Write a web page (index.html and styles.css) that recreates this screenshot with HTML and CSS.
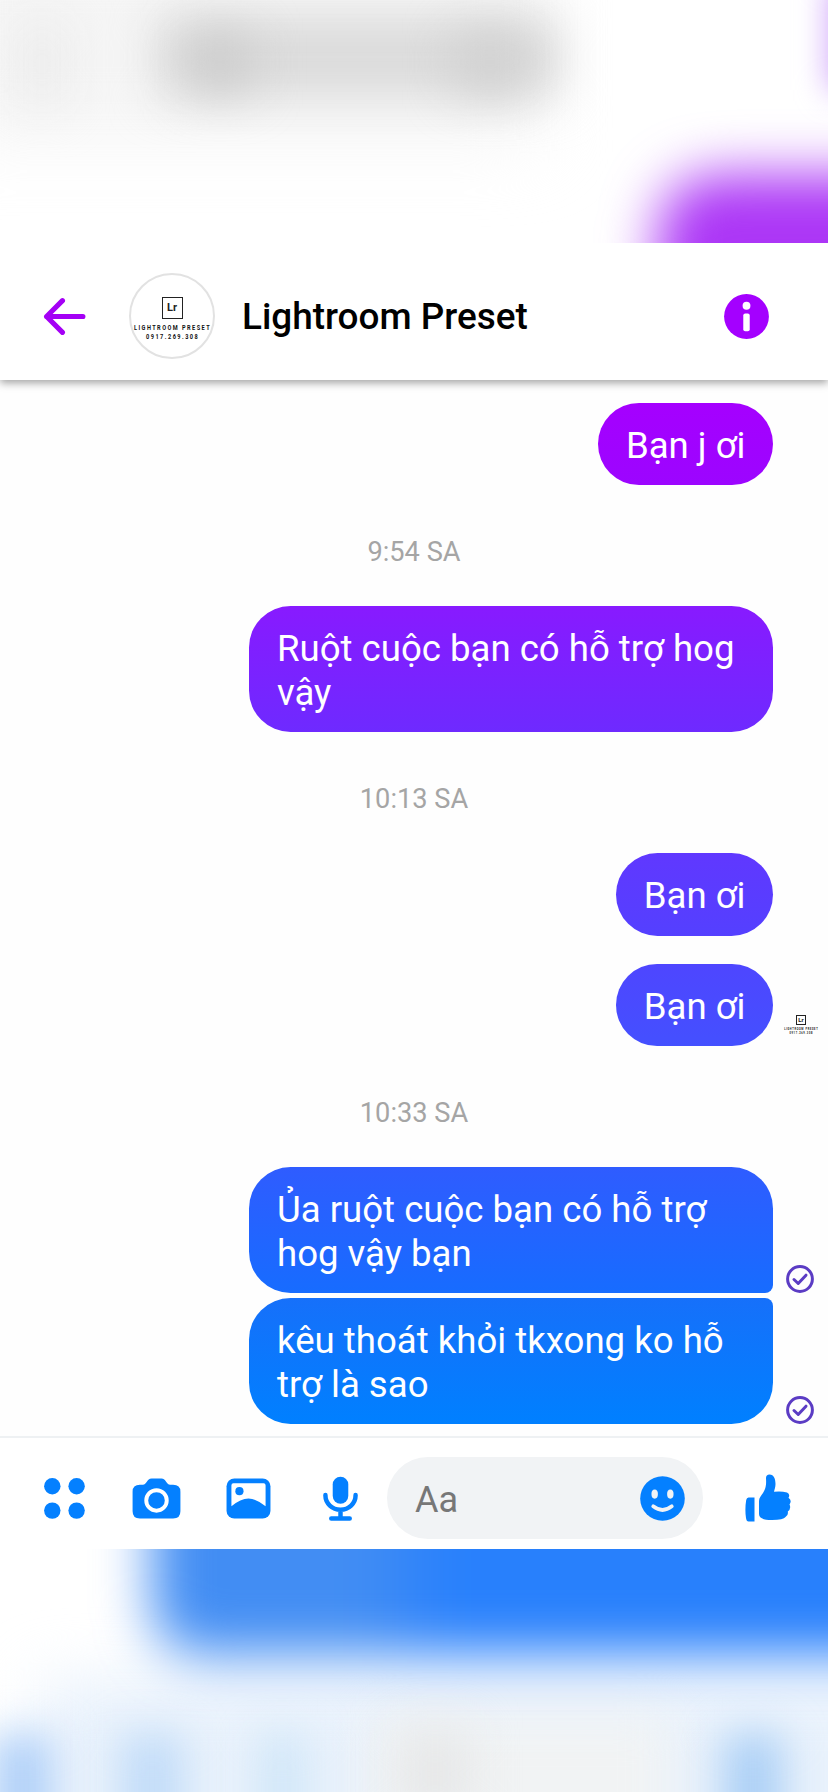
FILE: index.html
```html
<!DOCTYPE html>
<html lang="vi">
<head>
<meta charset="utf-8">
<title>Lightroom Preset</title>
<link rel="stylesheet" href="styles.css">
</head>
<body>
<div class="page">
  <div class="band band-top">
    <i class="haze haze-status"></i>
    <i class="haze haze-back"></i>
    <i class="haze haze-title"></i>
    <i class="haze haze-title-left"></i>
    <i class="haze haze-title-right"></i>
    <i class="haze haze-info"></i>
    <i class="haze haze-bubble"></i>
  </div>

  <header class="header">
    <svg class="back" viewBox="0 0 42 38" fill="none" stroke="#a400f5" stroke-width="5" stroke-linecap="round" stroke-linejoin="round"><path d="M39 19H3.500M19 3.500L3.500 19L19 34.500"/></svg>
    <div class="avatar">
      <span class="logo">Lr</span>
      <svg class="caption" viewBox="0 0 78 18"><g transform="scale(.72 1)"><text x="54" y="7" text-anchor="middle" textLength="105">LIGHTROOM PRESET</text><text x="54" y="16.500" text-anchor="middle" textLength="72">0917.269.308</text></g></svg>
    </div>
    <h1 class="title">Lightroom Preset</h1>
    <svg class="info" viewBox="0 0 46 46"><circle cx="23" cy="23" r="22.900" fill="#a400ff"/><circle cx="23" cy="12" r="4" fill="#fff"/><rect x="19.700" y="20" width="6.600" height="18" rx="2" fill="#fff"/></svg>
  </header>

  <main class="chat">
    <div class="row"><p class="bubble b1">Bạn j ơi</p></div>
    <time class="time">9:54 SA</time>
    <div class="row"><p class="bubble wide b2">Ruột cuộc bạn có hỗ trợ hog<br>vậy</p></div>
    <time class="time">10:13 SA</time>
    <div class="row"><p class="bubble b3">Bạn ơi</p></div>
    <div class="row spaced"><p class="bubble b4">Bạn ơi</p>
      <div class="seen">
        <span class="logo-small">Lr</span>
        <svg class="caption-small" viewBox="0 0 78 18"><g transform="scale(.72 1)"><text x="54" y="7" text-anchor="middle" textLength="105">LIGHTROOM PRESET</text><text x="54" y="16.500" text-anchor="middle" textLength="72">0917.269.308</text></g></svg>
      </div>
    </div>
    <time class="time">10:33 SA</time>
    <div class="row"><p class="bubble wide b5">Ủa ruột cuộc bạn có hỗ trợ<br>hog vậy bạn</p>
      <svg class="sent" viewBox="0 0 28 28" fill="none" stroke="#5b3cc4" stroke-width="3" stroke-linecap="round" stroke-linejoin="round"><circle cx="14" cy="14" r="12.400"/><path d="M8 14.500L12.200 18.500L20 10.200"/></svg>
    </div>
    <div class="row joined"><p class="bubble wide b6">kêu thoát khỏi tkxong ko hỗ<br>trợ là sao</p>
      <svg class="sent" viewBox="0 0 28 28" fill="none" stroke="#5b3cc4" stroke-width="3" stroke-linecap="round" stroke-linejoin="round"><circle cx="14" cy="14" r="12.400"/><path d="M8 14.500L12.200 18.500L20 10.200"/></svg>
    </div>
  </main>

  <footer class="composer">
    <svg class="ic-grid" viewBox="0 0 42 42"><circle cx="8.500" cy="8.500" r="8.400"/><circle cx="33.400" cy="8.500" r="8.400"/><circle cx="8.500" cy="33.400" r="8.400"/><circle cx="33.400" cy="33.400" r="8.400"/></svg>
    <svg class="ic-camera" viewBox="0 0 50 42"><path d="M20 .5H30C35 .5 35 7 39 7H42Q49.500 7 49.500 14V34Q49.500 41.500 42 41.500H8Q.5 41.500 .5 34V14Q.5 7 8 7H11C15 7 15 .5 20 .5Z"/><circle cx="25" cy="23" r="10.500" fill="none" stroke="#fff" stroke-width="4"/></svg>
    <svg class="ic-image" viewBox="0 0 46 42"><rect x=".5" y=".5" width="45" height="41" rx="8"/><path d="M7.500 5.500H38.500Q40.500 5.500 40.500 7.500V29Q31 21 23 21Q15 21 5.500 29V7.500Q5.500 5.500 7.500 5.500Z" fill="#fff"/><circle cx="13.700" cy="13.500" r="4.200"/></svg>
    <svg class="ic-mic" viewBox="0 0 36 46"><rect x="10" y=".5" width="16" height="28" rx="8"/><path d="M2.500 19.500V20A15.500 14.500 0 0 0 33.500 20V19.500M18 35V43M8.500 43.500H27.500" fill="none" stroke="#0480ff" stroke-width="4.600" stroke-linecap="round"/></svg>
    <div class="field">
      <span>Aa</span>
      <svg class="ic-smile" viewBox="0 0 46 46"><circle cx="23" cy="23" r="22.800"/><ellipse cx="15" cy="18.500" rx="3.300" ry="4.700" fill="#f1f3f5"/><ellipse cx="31" cy="18.500" rx="3.300" ry="4.700" fill="#f1f3f5"/><path d="M13.500 31Q23 38.500 32.500 31" fill="none" stroke="#f1f3f5" stroke-width="3.800" stroke-linecap="round"/></svg>
    </div>
    <svg class="ic-like" viewBox="0 0 46 48"><path d="M3.500 23.500H9.500V47.500H3.500Q1.500 47.500 1 44Q-.3 35 1.200 26Q1.700 23.500 3.500 23.500Z"/><path d="M21 4Q21 .5 24.500 .5C29 .5 30.500 5 30.500 10C30.500 13 29.500 15.500 29 17.800Q36 16.700 42 18.600Q45.500 20.300 43.500 23.800Q47.300 26.500 44.500 30.500Q46.500 34.500 42.800 37.500Q43.500 41.500 40.500 43Q38.500 46 27 46Q14 46 14 40V27C14 23.500 16 22.200 18 19C20.500 15 21.500 12 21 4Z"/></svg>
  </footer>

  <div class="band band-bottom">
    <i class="haze bar"></i>
    <i class="haze field-haze"></i>
    <i class="haze blue"></i>
    <i class="haze dot d1"></i>
    <i class="haze dot d2"></i>
    <i class="haze dot d3"></i>
    <i class="haze dot d4"></i>
    <i class="haze letters"></i>
  </div>
</div>
</body>
</html>
```

FILE: styles.css
```css
* { box-sizing: border-box; }
body { margin: 0; background: #fff; font-family: Roboto, "Noto Sans", sans-serif; }
.page { width: 828px; height: 1792px; overflow: hidden; display: flex; flex-direction: column; background: #fefefe; }
svg { display: block; flex: none; }

/* Defocused strips above and below the conversation */
.band { position: relative; overflow: hidden; flex: none; }
.band-top { height: 243px; background: #fff; }
.band-bottom { height: 243px; background: #fff; }
.haze { position: absolute; display: block; filter: blur(24px); }
.haze-status { left: -60px; top: -60px; width: 600px; height: 200px; background: #f5f5f5; filter: blur(36px); }
.haze-back { left: 22px; top: 24px; width: 40px; height: 80px; background: #eaeaea; }
.haze-title { left: 158px; top: 18px; width: 400px; height: 78px; background: #dadada; }
.haze-title-left { left: 190px; top: 34px; width: 60px; height: 56px; background: #cbcbcb; }
.haze-title-right { left: 455px; top: 34px; width: 70px; height: 56px; background: #d0d0d0; }
.haze-info { left: 829px; top: -20px; width: 60px; height: 110px; background: #cda0fa; filter: blur(16px); }
.haze-bubble { left: 658px; top: 174px; width: 340px; height: 240px; border-radius: 60px; background: #ac36f6; filter: blur(27px); }

.blue { left: 152px; top: -140px; width: 900px; height: 246px; border-radius: 50px; background: linear-gradient(90deg, #428df3 0, #428df3 210px, #2880fc 300px); filter: blur(27px); }
.bar { left: 40px; top: 130px; width: 900px; height: 230px; background: #e9f2fc; filter: blur(30px); }
.field-haze { left: 370px; top: 165px; width: 300px; height: 180px; background: #f1f3f4; }
.dot { top: 185px; height: 110px; filter: blur(21px); }
.d1 { left: -10px; width: 64px; background: #b0d0f8; }
.d2 { left: 120px; width: 64px; background: #c2dcf8; }
.d3 { left: 258px; width: 48px; background: #d0e6f8; }
.d4 { left: 724px; width: 58px; background: #a9cef5; }
.letters { left: 400px; top: 180px; width: 70px; height: 90px; background: #e6e7e8; }

.header { position: relative; z-index: 1; flex: none; height: 137px; background: #fff; box-shadow: 0 3px 8px rgba(0,0,0,.36); clip-path: inset(0 0 -16px 0); display: flex; align-items: center; padding: 9px 59px 0 43px; }
.back { width: 43px; height: 39px; }
.avatar { width: 86px; height: 86px; margin-left: 43px; border: 2px solid #e2e2e2; border-radius: 50%; display: flex; flex-direction: column; align-items: center; padding-top: 22px; }
.logo { width: 21px; height: 22px; border: 1.5px solid #222; font: 700 11px/19px Roboto, sans-serif; text-align: center; color: #222; }
.caption { width: 78px; height: 18px; margin-top: 4px; }
.caption text, .caption-small text { font: 700 7.800px Roboto, sans-serif; fill: #111; }
.title { flex: 1; margin: 0 0 0 27px; font-size: 36.900px; line-height: 44px; font-weight: 500; color: #000; padding-top: 2px; }
.info { width: 45px; height: 45px; }

.chat { height: 1056px; flex: none; padding: 22.500px 0 0 249px; }
.row { position: relative; display: flex; justify-content: flex-end; padding-right: 55px; }
.bubble { margin: 0; padding: 21px 27.500px 18px 28px; border-radius: 41.500px; font-size: 36.600px; line-height: 43.500px; color: #fff; }
.wide { width: 524px; white-space: nowrap; }
.spaced { margin-top: 28px; }
.joined { margin-top: 5px; }
.time { display: block; height: 121px; padding-top: 51px; margin-left: -249px; text-align: center; font-size: 27.200px; line-height: 32px; color: #a5a5a5; }
.b1 { background: linear-gradient(#a500ff, #9c05ff); }
.b2 { background: linear-gradient(#881aff, #6e2aff); }
.b3 { background: linear-gradient(#6038ff, #5440ff); }
.b4 { background: linear-gradient(#4e46ff, #4450ff); }
.b5 { background: linear-gradient(#2f5cff, #176cff); border-bottom-right-radius: 8px; }
.b6 { background: linear-gradient(#1670fa, #0080ff); border-top-right-radius: 8px; }
.sent { position: absolute; right: 14px; bottom: 0; width: 28px; height: 28px; }
.seen { position: absolute; right: 9px; bottom: 11px; width: 36px; display: flex; flex-direction: column; align-items: center; }
.logo-small { width: 10px; height: 10px; border: 1px solid #222; font: 700 6px/8px Roboto, sans-serif; text-align: center; color: #222; }
.caption-small { width: 36px; height: 8px; margin-top: 2px; }

.composer { flex: none; height: 113px; border-top: 2px solid #eef1f3; background: #fff; display: flex; align-items: center; padding: 9px 36px 0 44px; fill: #0480ff; }
.ic-grid { width: 41px; height: 41px; }
.ic-camera { width: 49px; height: 41px; margin-left: 47px; }
.ic-image { width: 45px; height: 41px; margin-left: 45px; }
.ic-mic { width: 35px; height: 45px; margin-left: 52px; }
.field { width: 316px; height: 82px; margin-left: 29px; border-radius: 41px; background: #f1f3f5; display: flex; align-items: center; justify-content: space-between; padding: 0 18px 0 28px; font-size: 36px; color: #777; }
.field span { padding-top: 3px; }
.ic-smile { width: 45px; height: 45px; }
.ic-like { width: 46px; height: 48px; margin-left: 42px; }
```
